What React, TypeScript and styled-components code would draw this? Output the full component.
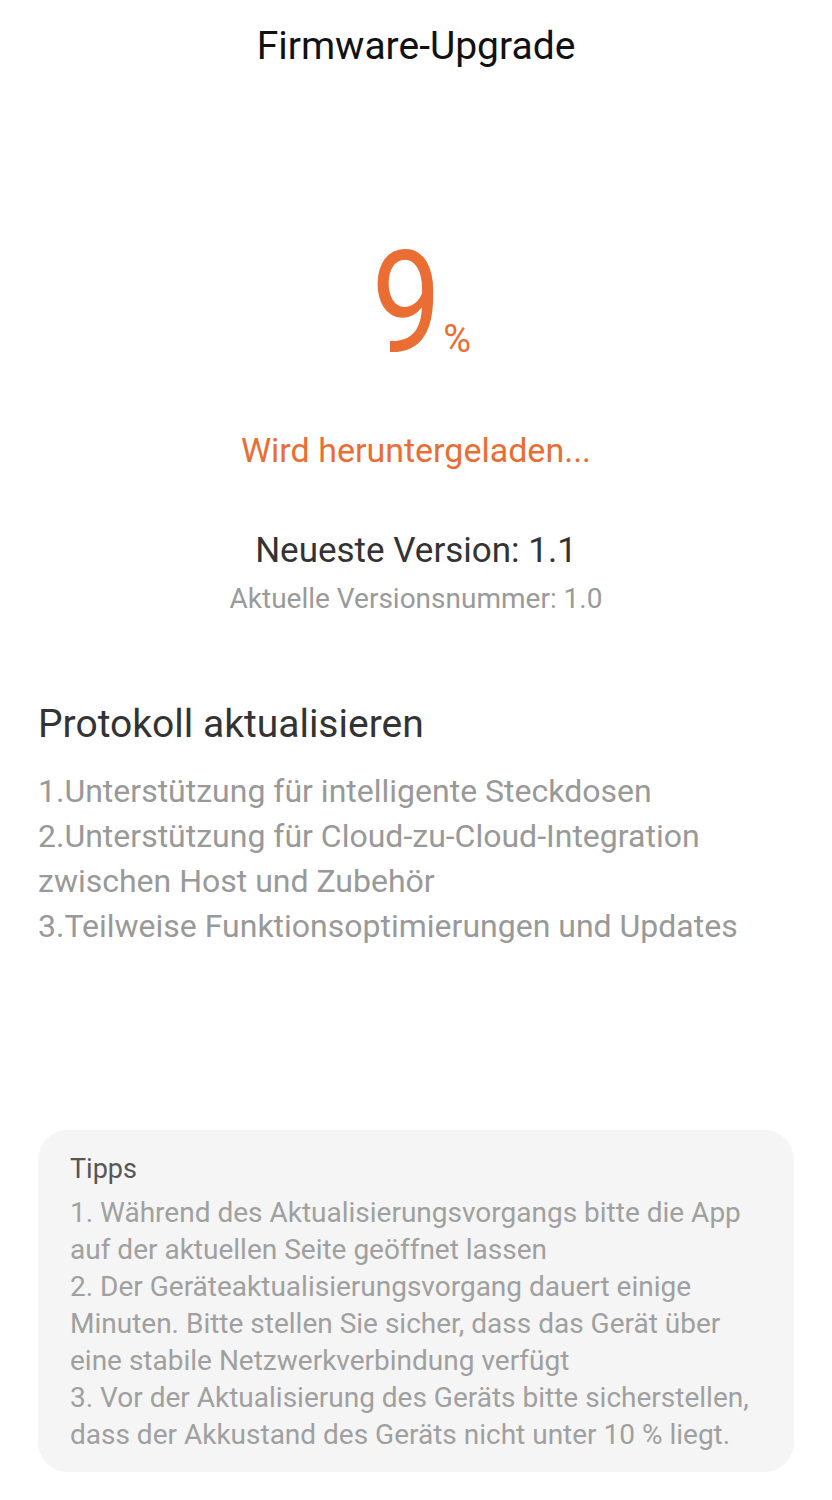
import React from "react";
import styled, { createGlobalStyle } from "styled-components";

const GlobalStyle = createGlobalStyle`
	html, body {
		margin: 0;
		padding: 0;
		background: #ffffff;
		font-family: Roboto, "Noto Sans", sans-serif;
	}
`;

const Page = styled.div`
	width: 832px;
	min-height: 1500px;
	box-sizing: border-box;
	padding: 0 38px;
	display: flex;
	flex-direction: column;
	background: #ffffff;
`;

const Title = styled.h1`
	margin: 0;
	padding-top: 23px;
	font-size: 39px;
	line-height: 46px;
	font-weight: 400;
	color: #111;
	text-align: center;
`;

const Progress = styled.div`
	margin-top: 163px;
	display: flex;
	justify-content: center;
	align-items: baseline;
	color: #ea6d33;
	line-height: 1;
`;

const Percent = styled.span`
	display: inline-block;
	font-size: 143px;
	font-weight: 400;
	transform: scaleX(0.87);
	transform-origin: right center;
`;

const PercentSign = styled.span`
	font-size: 38px;
	margin-left: 2px;
`;

const Status = styled.div`
	margin-top: 55px;
	text-align: center;
	font-size: 34px;
	line-height: 40px;
	color: #ea6d33;
`;

const Version = styled.div<{ $muted?: boolean }>`
	text-align: center;
	font-size: ${(p) => (p.$muted ? "28px" : "35px")};
	line-height: ${(p) => (p.$muted ? "33px" : "41px")};
	color: ${(p) => (p.$muted ? "#9a9a9a" : "#333")};
	margin-top: ${(p) => (p.$muted ? "11px" : "60px")};
`;

const LogTitle = styled.h2`
	margin: 86px 0 0;
	font-size: 39px;
	line-height: 46px;
	font-weight: 400;
	color: #333;
`;

const LogList = styled.div`
	margin-top: 22px;
	font-size: 32px;
	line-height: 45px;
	color: #999;
`;

const Tips = styled.div`
	margin-top: 181px;
	background: #f5f5f5;
	border-radius: 30px;
	padding: 22px 32px 19px;
`;

const TipsTitle = styled.div`
	font-size: 27px;
	line-height: 34px;
	color: #555;
`;

const TipsText = styled.div`
	margin-top: 8px;
	font-size: 28px;
	line-height: 37px;
	color: #a0a0a0;
`;

const App = () => (
	<>
		<GlobalStyle />
		<Page>
			<Title>Firmware-Upgrade</Title>
			<Progress>
				<Percent>9</Percent>
				<PercentSign>%</PercentSign>
			</Progress>
			<Status>Wird heruntergeladen...</Status>
			<Version>Neueste Version: 1.1</Version>
			<Version $muted>Aktuelle Versionsnummer: 1.0</Version>
			<LogTitle>Protokoll aktualisieren</LogTitle>
			<LogList>
				<div>1.Unterstützung für intelligente Steckdosen</div>
				<div>2.Unterstützung für Cloud-zu-Cloud-Integration zwischen Host und Zubehör</div>
				<div>3.Teilweise Funktionsoptimierungen und Updates</div>
			</LogList>
			<Tips>
				<TipsTitle>Tipps</TipsTitle>
				<TipsText>
					<div>1. Während des Aktualisierungsvorgangs bitte die App auf der aktuellen Seite geöffnet lassen</div>
					<div>2. Der Geräteaktualisierungsvorgang dauert einige Minuten. Bitte stellen Sie sicher, dass das Gerät über eine stabile Netzwerkverbindung verfügt</div>
					<div>3. Vor der Aktualisierung des Geräts bitte sicherstellen, dass der Akkustand des Geräts nicht unter 10 % liegt.</div>
				</TipsText>
			</Tips>
		</Page>
	</>
);

export default App;
